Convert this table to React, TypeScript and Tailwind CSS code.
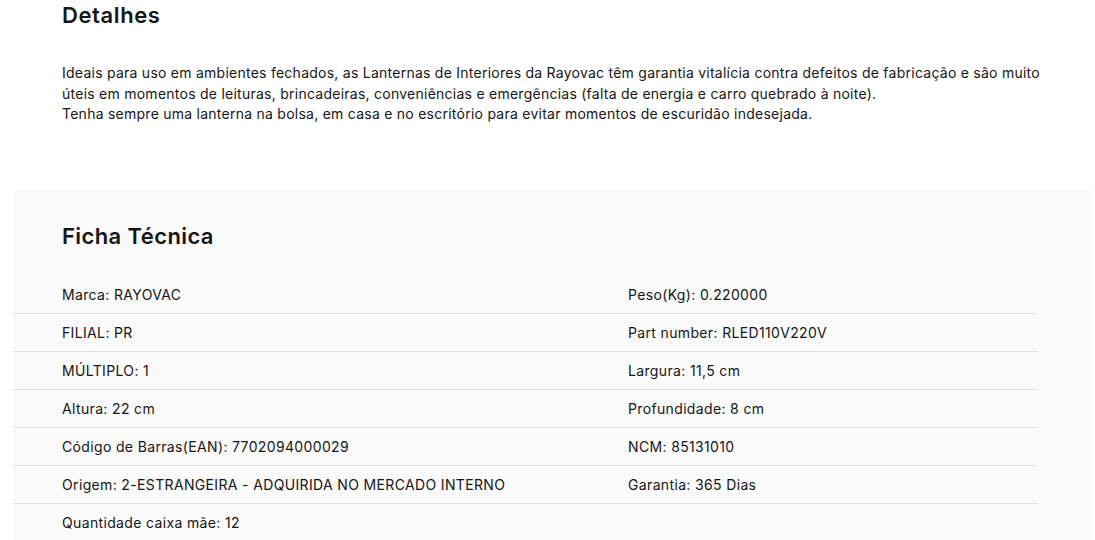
import React from 'react';

const specs: [string, string][] = [
  ['Marca: RAYOVAC', 'Peso(Kg): 0.220000'],
  ['FILIAL: PR', 'Part number: RLED110V220V'],
  ['MÚLTIPLO: 1', 'Largura: 11,5 cm'],
  ['Altura: 22 cm', 'Profundidade: 8 cm'],
  ['Código de Barras(EAN): 7702094000029', 'NCM: 85131010'],
  ['Origem: 2-ESTRANGEIRA - ADQUIRIDA NO MERCADO INTERNO', 'Garantia: 365 Dias'],
  ['Quantidade caixa mãe: 12', ''],
];

function App() {
  return (
    <div className="w-[1095px] h-[540px] overflow-hidden bg-white text-[#161616] font-['Inter',sans-serif]">
      <section className="pl-[62px]">
        <h2 className="text-[22px] leading-[30px] font-semibold tracking-[0.6px]">Detalhes</h2>
        <p className="mt-[33px] w-[995px] text-[14px] leading-[20.5px] tracking-[0.25px]">
          Ideais para uso em ambientes fechados, as Lanternas de Interiores da Rayovac têm garantia vitalícia contra defeitos de fabricação e são muito úteis em momentos de leituras, brincadeiras, conveniências e emergências (falta de energia e carro quebrado à noite).
          <br />
          Tenha sempre uma lanterna na bolsa, em casa e no escritório para evitar momentos de escuridão indesejada.
        </p>
      </section>

      <section className="mt-[64px] ml-[13px] w-[1080px] h-[400px] rounded-t-lg bg-[#fafafa] pt-[32px]">
        <h3 className="pl-[49px] text-[22px] leading-[30px] font-semibold tracking-[0.4px]">Ficha Técnica</h3>
        <div className="mt-[25px] w-[1024px] grid grid-cols-[566px_458px] text-[14px] tracking-[0.35px]">
          {specs.map(([left, right], i) => (
            <React.Fragment key={i}>
              <div className="h-[38px] flex items-center pl-[49px] border-b border-[#e0e0e0]">{left}</div>
              <div className="h-[38px] flex items-center pl-[49px] border-b border-[#e0e0e0]">{right}</div>
            </React.Fragment>
          ))}
        </div>
      </section>
    </div>
  );
}

export default App;
